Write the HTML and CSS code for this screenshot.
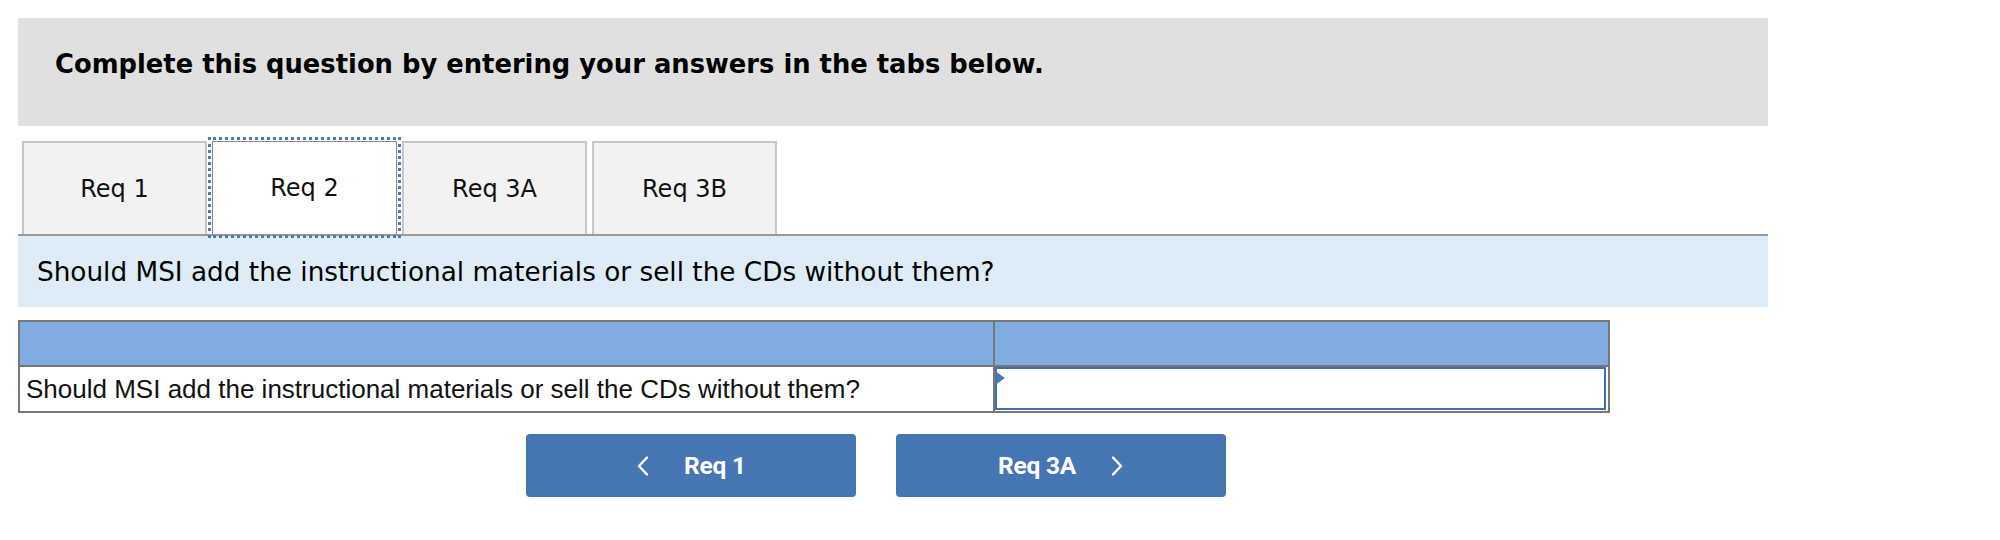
FILE: index.html
```html
<!DOCTYPE html>
<html lang="en">
<head>
<meta charset="utf-8">
<title>Req 2</title>
<link rel="stylesheet" href="styles.css">
</head>
<body>
<div class="page">
  <div class="banner">Complete this question by entering your answers in the tabs below.</div>

  <div class="tabs">
    <div class="tab">Req 1</div>
    <div class="tab tab-active">Req 2</div>
    <div class="tab">Req 3A</div>
    <div class="tab">Req 3B</div>
  </div>

  <div class="question">Should MSI add the instructional materials or sell the CDs without them?</div>

  <div class="answer-grid">
    <div class="head-cell"></div>
    <div class="head-cell"></div>
    <div class="body-cell label-cell">Should MSI add the instructional materials or sell the CDs without them?</div>
    <div class="body-cell input-cell">
      <div class="answer-box"></div>
      <span class="marker"></span>
    </div>
  </div>

  <div class="nav">
    <button class="nav-btn" type="button">
      <svg class="chev" width="14" height="20" viewBox="0 0 14 20"><path d="M11 1.5 L3 10 L11 18.5" fill="none" stroke="#fff" stroke-width="2.4" stroke-linecap="round" stroke-linejoin="round"/></svg>
      <span class="nav-label">Req 1</span>
    </button>
    <button class="nav-btn" type="button">
      <span class="nav-label">Req 3A</span>
      <svg class="chev" width="14" height="20" viewBox="0 0 14 20"><path d="M3 1.5 L11 10 L3 18.5" fill="none" stroke="#fff" stroke-width="2.4" stroke-linecap="round" stroke-linejoin="round"/></svg>
    </button>
  </div>
</div>
</body>
</html>
```

FILE: styles.css
```css
html, body {
  margin: 0;
  padding: 0;
  background: #ffffff;
}

body {
  font-family: "DejaVu Sans", Verdana, sans-serif;
  color: #000;
}

.page {
  padding: 18px 0 0 18px;
  width: 1750px;
}

.banner {
  background: #e0e0e0;
  height: 108px;
  box-sizing: border-box;
  padding: 31px 0 0 37px;
  font-weight: bold;
  font-size: 25.8px;
  line-height: 30px;
  color: #000;
}

.tabs {
  margin-top: 15px;
  display: flex;
  gap: 5px;
  padding-left: 4px;
  border-bottom: 2px solid #999999;
}

.tab {
  width: 185px;
  height: 93px;
  box-sizing: border-box;
  background: #f2f2f2;
  border: 2px solid #c6c6c6;
  border-bottom: none;
  display: flex;
  align-items: center;
  justify-content: center;
  font-size: 24px;
  color: #111;
}

.tab-active {
  background: #ffffff;
  border: 1px solid #8a8a8a;
  border-bottom: none;
  outline: 3px dotted #4a7bbf;
  outline-offset: 1px;
  position: relative;
  z-index: 1;
}

.question {
  background: #deecf8;
  height: 71px;
  box-sizing: border-box;
  display: flex;
  align-items: center;
  padding-left: 19px;
  font-size: 26.3px;
  color: #000;
}

.answer-grid {
  margin-top: 13px;
  width: 1592px;
  box-sizing: border-box;
  display: grid;
  grid-template-columns: 973px 1fr;
  grid-template-rows: 43px 44px;
  gap: 2px;
  background: #777777;
  border: 2px solid #777777;
}

.head-cell {
  background: #80acdf;
}

.body-cell {
  background: #ffffff;
}

.label-cell {
  font-family: "Liberation Sans", Arial, sans-serif;
  font-size: 26px;
  line-height: 44px;
  padding-left: 6px;
  color: #111;
  white-space: nowrap;
}

.input-cell {
  position: relative;
  padding: 0 2px 1px 0;
  box-sizing: border-box;
}

.answer-box {
  height: 100%;
  box-sizing: border-box;
  border: 2px solid #3f6fb1;
  background: #fff;
}

.marker {
  position: absolute;
  left: 0;
  top: 4px;
  width: 0;
  height: 0;
  border-top: 7px solid transparent;
  border-bottom: 7px solid transparent;
  border-left: 10px solid #4675b4;
}

.nav {
  margin-top: 21px;
  display: flex;
  gap: 40px;
  padding-left: 508px;
}

.nav-btn {
  width: 330px;
  height: 63px;
  border: none;
  border-radius: 4px;
  background: #4675b4;
  color: #fff;
  display: flex;
  align-items: center;
  justify-content: center;
  gap: 34px;
  font-family: Roboto, "Liberation Sans", sans-serif;
  font-weight: bold;
  font-size: 24.5px;
  padding: 0;
  cursor: pointer;
}

.nav-label {
  letter-spacing: -0.2px;
}

.chev {
  display: block;
}
```
